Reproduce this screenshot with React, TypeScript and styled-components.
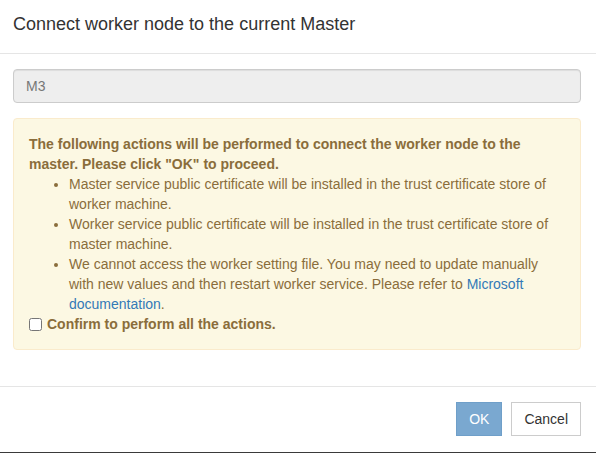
import React from "react";
import styled, { createGlobalStyle } from "styled-components";

const Global = createGlobalStyle`
  html, body { margin: 0; padding: 0; background: #fff; }
  body {
    font-family: "Liberation Sans", Arial, Helvetica, sans-serif;
    font-size: 14px;
    line-height: 1.42857143;
    color: #333;
  }
  * { box-sizing: border-box; }
`;

const Modal = styled.div`
  width: 596px;
  height: 453px;
  background: #fff;
  border-bottom: 1px solid #3a3a3a;
  display: flex;
  flex-direction: column;
`;

const Header = styled.div`
  padding: 12px 15px 15px 13px;
  border-bottom: 1px solid #e5e5e5;
`;

const Title = styled.h4`
  margin: 0;
  font-size: 18px;
  font-weight: 500;
  line-height: 1.42857143;
  color: #333;
`;

const Body = styled.div`
  padding: 15px 15px 16px 13px;
`;

const FormGroup = styled.div`
  margin-bottom: 15px;
`;

const Input = styled.input`
  display: block;
  width: 100%;
  height: 34px;
  padding: 6px 12px;
  font-family: inherit;
  font-size: 14px;
  line-height: 1.42857143;
  color: #777;
  -webkit-text-fill-color: #777;
  background: #eee;
  border: 1px solid #ccc;
  border-radius: 4px;
  box-shadow: inset 0 1px 1px rgba(0, 0, 0, 0.075);
  opacity: 1;
  cursor: not-allowed;
`;

const Alert = styled.div`
  padding: 15px;
  margin-bottom: 20px;
  border: 1px solid #faebcc;
  border-radius: 4px;
  background: #fcf8e3;
  color: #8a6d3b;
`;

const Lead = styled.div`
  font-weight: bold;
`;

const List = styled.ul`
  margin: 0;
  padding-left: 40px;
`;

const Item = styled.li``;

const Link = styled.a`
  color: #337ab7;
  text-decoration: none;
`;

const CheckLabel = styled.label`
  display: flex;
  align-items: center;
  font-weight: bold;
  height: 20px;
`;

const Check = styled.input`
  width: 13px;
  height: 13px;
  margin: 1px 5px 0 0;
`;

const Footer = styled.div`
  border-top: 1px solid #e5e5e5;
  padding: 15px 15px 15px 13px;
  display: flex;
  justify-content: flex-end;
  gap: 9px;
`;

const Button = styled.button<{ $primary?: boolean }>`
  height: 34px;
  padding: 6px 12px;
  font-family: inherit;
  font-size: 14px;
  line-height: 1.42857143;
  border-radius: 0;
  border: 1px solid ${(p) => (p.$primary ? "#6f9fc9" : "#ccc")};
  background: ${(p) => (p.$primary ? "#7aa8d0" : "#fff")};
  color: ${(p) => (p.$primary ? "#fff" : "#333")};
  cursor: ${(p) => (p.$primary ? "not-allowed" : "pointer")};
`;

export default function App() {
  return (
    <>
      <Global />
      <Modal>
        <Header>
          <Title>Connect worker node to the current Master</Title>
        </Header>
        <Body>
          <FormGroup>
            <Input value="M3" disabled readOnly />
          </FormGroup>
          <Alert>
            <Lead>
              The following actions will be performed to connect the worker node to the
              master. Please click "OK" to proceed.
            </Lead>
            <List>
              <Item>
                Master service public certificate will be installed in the trust certificate
                store of worker machine.
              </Item>
              <Item>
                Worker service public certificate will be installed in the trust certificate
                store of master machine.
              </Item>
              <Item>
                We cannot access the worker setting file. You may need to update manually with
                new values and then restart worker service. Please refer to{" "}
                <Link href="#">Microsoft documentation</Link>.
              </Item>
            </List>
            <CheckLabel>
              <Check type="checkbox" />
              Confirm to perform all the actions.
            </CheckLabel>
          </Alert>
        </Body>
        <Footer>
          <Button $primary disabled>
            OK
          </Button>
          <Button>Cancel</Button>
        </Footer>
      </Modal>
    </>
  );
}
